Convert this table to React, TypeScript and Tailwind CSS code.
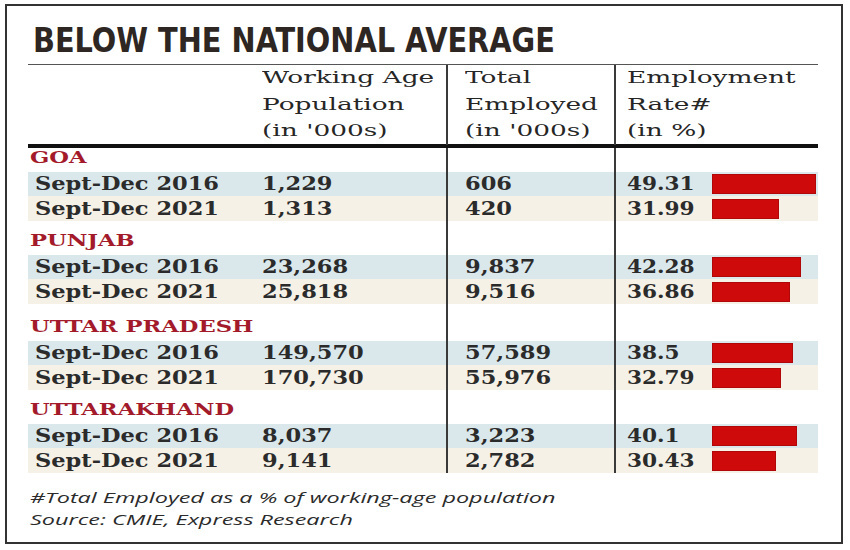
const groups = [
  {
    name: "GOA",
    h: "h-[24px]",
    rows: [
      ["Sept-Dec 2016", "1,229", "606", "49.31"],
      ["Sept-Dec 2021", "1,313", "420", "31.99"],
    ],
  },
  {
    name: "PUNJAB",
    h: "h-[34px]",
    rows: [
      ["Sept-Dec 2016", "23,268", "9,837", "42.28"],
      ["Sept-Dec 2021", "25,818", "9,516", "36.86"],
    ],
  },
  {
    name: "UTTAR PRADESH",
    h: "h-[37px]",
    rows: [
      ["Sept-Dec 2016", "149,570", "57,589", "38.5"],
      ["Sept-Dec 2021", "170,730", "55,976", "32.79"],
    ],
  },
  {
    name: "UTTARAKHAND",
    h: "h-[34px]",
    rows: [
      ["Sept-Dec 2016", "8,037", "3,223", "40.1"],
      ["Sept-Dec 2021", "9,141", "2,782", "30.43"],
    ],
  },
];

const serif = "font-['DejaVu_Serif','Liberation_Serif',serif]";

// stretched text, the print graphic is wider than the fonts we have
function Wide({ children, className }: { children: React.ReactNode; className: string }) {
  return <span className={"inline-block origin-left whitespace-nowrap " + className}>{children}</span>;
}

function Cells({ c1, c2, c3, c4 }: { c1?: React.ReactNode; c2?: React.ReactNode; c3?: React.ReactNode; c4?: React.ReactNode }) {
  return (
    <>
      <div className="w-[234px] pl-[7px] flex items-center">{c1}</div>
      <div className="w-[184px] flex items-center">{c2}</div>
      <div className="w-[168px] border-l-2 border-[#3a3a3a] pl-[17px] flex items-center">{c3}</div>
      <div className="w-[204px] border-l-2 border-[#3a3a3a] pl-[11px] flex items-center">{c4}</div>
    </>
  );
}

function Head({ lines }: { lines: string[] }) {
  return (
    <div className={`${serif} text-[16.5px] leading-[26.5px] text-[#262626]`}>
      {lines.map((l) => (
        <div key={l}>
          <Wide className="scale-x-[1.6]">{l}</Wide>
        </div>
      ))}
    </div>
  );
}

export default function App() {
  return (
    <div className="w-[850px] h-[550px] bg-white pt-[4px] pl-[5px]">
      <div className="w-[838px] h-[540px] border-2 border-[#333] pl-[21px]">
        {/* title */}
        <div className="h-[58px] pt-[18px] pl-[5px]">
          <Wide className="scale-x-[0.97] font-['Liberation_Sans_Narrow','DejaVu_Sans_Condensed',sans-serif] font-bold text-[33px] leading-none text-[#2d2622]">
            BELOW THE NATIONAL AVERAGE
          </Wide>
        </div>

        <div className="w-[790px] border-t border-[#555]">
          {/* column heads */}
          <div className="flex h-[79px] items-start">
            <Cells
              c2={<Head lines={["Working Age", "Population", "(in '000s)"]} />}
              c3={<Head lines={["Total", "Employed", "(in '000s)"]} />}
              c4={<Head lines={["Employment", "Rate#", "(in %)"]} />}
            />
          </div>
          <div className="h-[4px] bg-[#111]" />

          {groups.map((g) => (
            <div key={g.name}>
              <div className={`flex ${g.h}`}>
                <div className="w-[234px] pl-[2px] pb-[6px] flex items-end">
                  <Wide className={`scale-x-[1.37] ${serif} font-bold text-[16.5px] leading-none text-[#a31a2b]`}>
                    {g.name}
                  </Wide>
                </div>
                <div className="w-[184px]" />
                <div className="w-[168px] border-l-2 border-[#3a3a3a]" />
                <div className="w-[204px] border-l-2 border-[#3a3a3a]" />
              </div>
              {g.rows.map((r, i) => (
                <div
                  key={r[0]}
                  className={`flex ${serif} font-bold text-[18px] leading-[24px] text-[#2b2b2b] ${
                    i === 0 ? "h-[24px] bg-[#dae8eb]" : "h-[25px] bg-[#f5f1e6]"
                  }`}
                >
                  <Cells
                    c1={<Wide className="scale-x-[1.25]">{r[0]}</Wide>}
                    c2={<Wide className="scale-x-[1.25]">{r[1]}</Wide>}
                    c3={<Wide className="scale-x-[1.25]">{r[2]}</Wide>}
                    c4={
                      <>
                        <div className="w-[85px]">
                          <Wide className="scale-x-[1.2]">{r[3]}</Wide>
                        </div>
                        <div
                          className="h-[20px] bg-[#cf0a0a] border border-[#b00808]"
                          style={{ width: parseFloat(r[3]) * 2.11 }}
                        />
                      </>
                    }
                  />
                </div>
              ))}
            </div>
          ))}
        </div>

        {/* footnote */}
        <div className="mt-[13px] pl-[2px] font-['Open_Sans','DejaVu_Sans',sans-serif] italic text-[15px] leading-[22px] text-[#2b2b2b]">
          <div>
            <Wide className="scale-x-[1.56]">#Total Employed as a % of working-age population</Wide>
          </div>
          <div>
            <Wide className="scale-x-[1.56]">Source: CMIE, Express Research</Wide>
          </div>
        </div>
      </div>
    </div>
  );
}
